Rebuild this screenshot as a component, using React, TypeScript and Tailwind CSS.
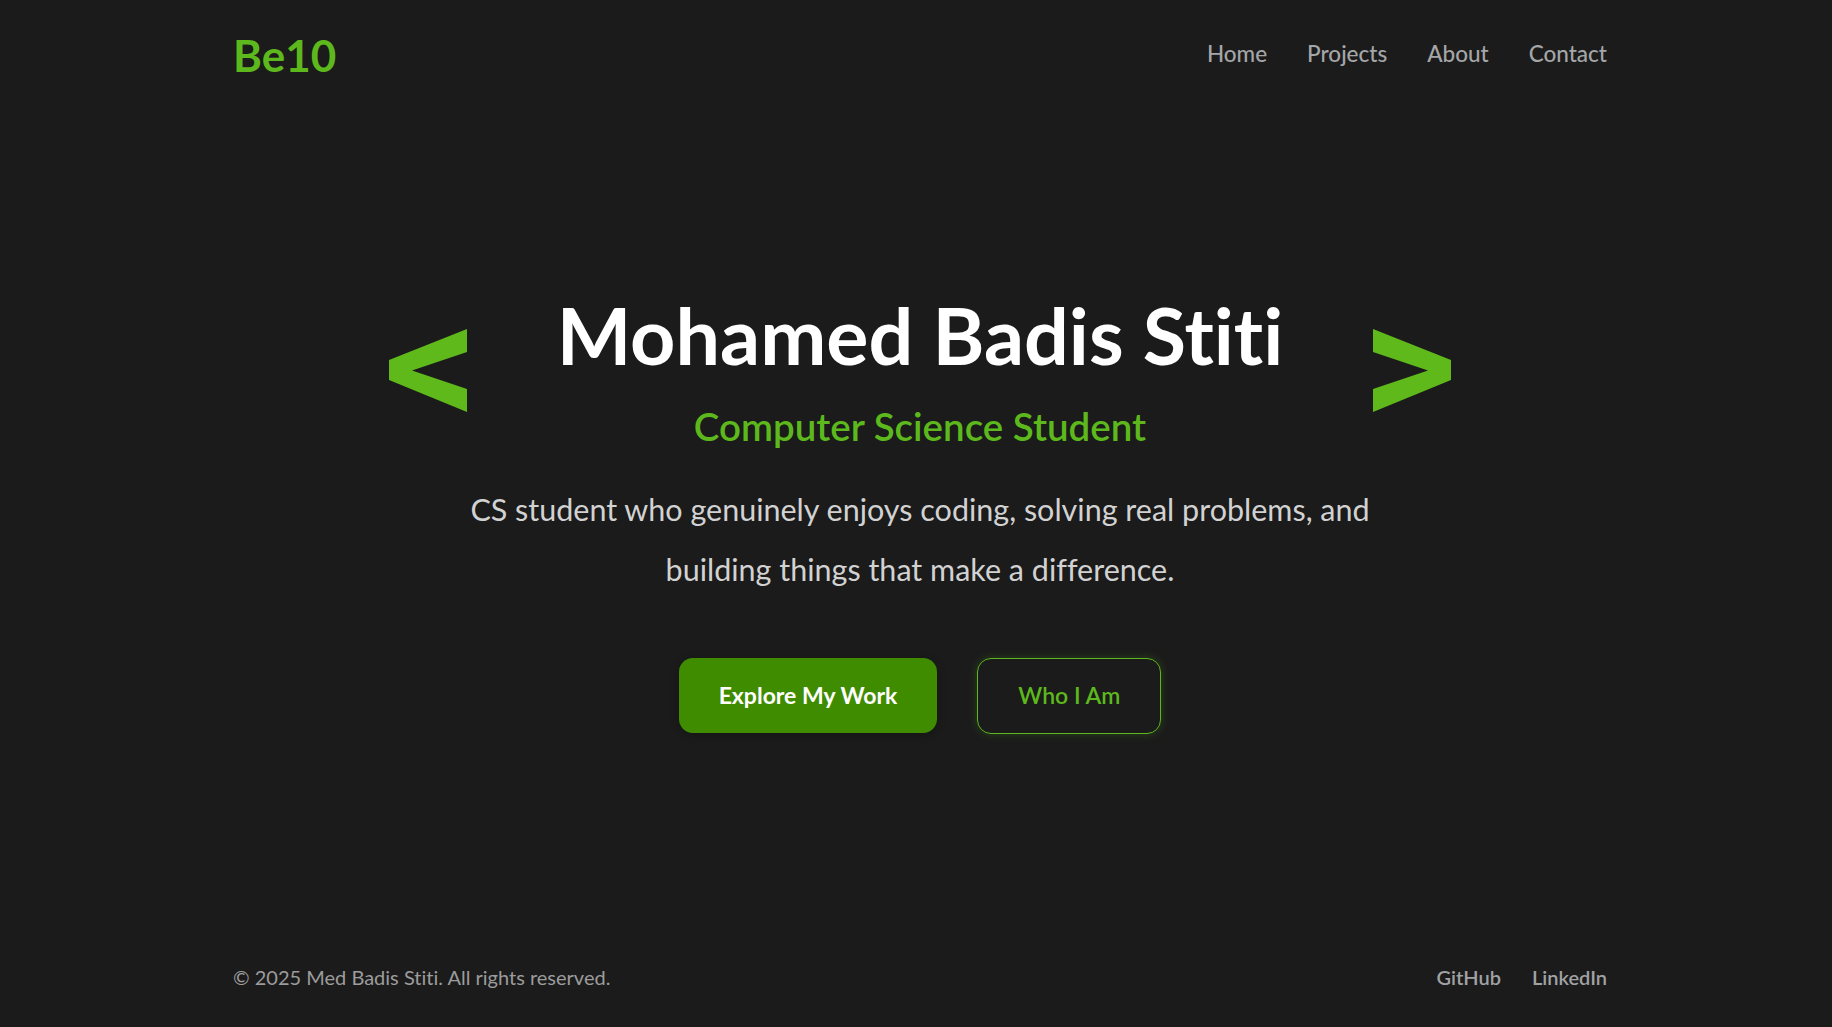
import React from 'react';

const navLinks = ['Home', 'Projects', 'About', 'Contact'];

function Chevron({ flip = false }: { flip?: boolean }) {
  return (
    <svg
      width="78"
      height="83"
      viewBox="0 0 78 83"
      className={flip ? 'shrink-0 -scale-x-100' : 'shrink-0'}
      aria-hidden="true"
    >
      <polygon points="78,0 78,23 23,41.5 78,60 78,83 0,51 0,31" fill="#5fb91b" />
    </svg>
  );
}

export default function App() {
  return (
    <div
      className="min-h-screen flex flex-col bg-[#1b1b1b] pl-2 [font-variant-ligatures:none]"
      style={{ fontFamily: 'Lato, "Open Sans", sans-serif' }}
    >
      {/* header */}
      <header className="w-[1374px] mx-auto pt-[33px] flex justify-between items-center">
        <a href="#" className="text-[44px] leading-none font-bold text-[#5cb81c]">
          Be10
        </a>
        <nav className="flex items-center gap-[40px] pb-[1px]">
          {navLinks.map((label) => (
            <a
              key={label}
              href="#"
              className="text-[22.5px] leading-none font-medium text-[#a4a6a8] hover:text-white transition-colors"
            >
              {label}
            </a>
          ))}
        </nav>
      </header>

      {/* hero */}
      <main className="flex-1 flex flex-col items-center pt-[218px]">
        <div className="flex items-center gap-[90px]">
          <Chevron />
          <div className="flex flex-col items-center">
            <h1 className="text-[79px] leading-none font-bold text-white">Mohamed Badis Stiti</h1>
            <h2 className="mt-[33px] text-[38.5px] leading-none font-semibold text-[#5cb81c]">
              Computer Science Student
            </h2>
          </div>
          <Chevron flip />
        </div>

        <p className="mt-[33px] w-[930px] text-center text-[30.5px] leading-[60px] text-[#d2d2d2]">
          CS student who genuinely enjoys coding, solving real problems, and building things that
          make a difference.
        </p>

        <div className="mt-[59px] flex items-center gap-[40px]">
          <a
            href="#"
            className="h-[75px] px-10 flex items-center rounded-[14px] bg-[#3f8c00] text-white text-[23px] font-bold shadow-[0_2px_10px_rgba(0,0,0,0.25)]"
          >
            Explore My Work
          </a>
          <a
            href="#"
            className="h-[76px] px-10 flex items-center rounded-[14px] border-[1.5px] border-[#5cb81c] text-[#5cb81c] text-[23px] font-semibold shadow-[0_0_10px_rgba(92,184,28,0.25)]"
          >
            Who I Am
          </a>
        </div>
      </main>

      {/* footer */}
      <footer className="w-[1374px] mx-auto pb-[40px] flex justify-between items-center">
        <p className="text-[20px] leading-none text-[#9c9c9c]">© 2025 Med Badis Stiti. All rights reserved.</p>
        <div className="flex items-center gap-[31px]">
          <a href="#" className="text-[20px] leading-none font-semibold text-[#a0a2a4]">
            GitHub
          </a>
          <a href="#" className="text-[20px] leading-none font-semibold text-[#a0a2a4]">
            LinkedIn
          </a>
        </div>
      </footer>
    </div>
  );
}
